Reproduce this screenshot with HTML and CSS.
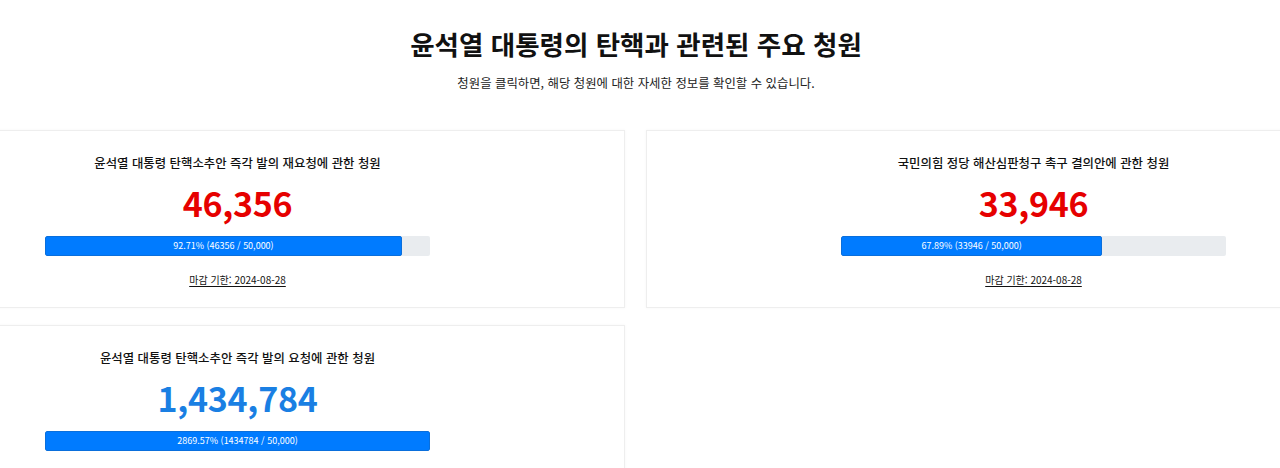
FILE: index.html
```html
<!DOCTYPE html>
<html lang="ko">

<head>
    <meta charset="UTF-8">
    <meta name="viewport" content="width=device-width, initial-scale=1.0">
    <title>윤석열 대통령의 탄핵과 관련된 주요 청원</title>
    <link rel="stylesheet" href="styles.css">
</head>

<body>
    <header class="page-head">
        <h1>윤석열 대통령의 탄핵과 관련된 주요 청원</h1>
        <p class="lead">청원을 클릭하면, 해당 청원에 대한 자세한 정보를 확인할 수 있습니다.</p>
    </header>

    <div class="petitions">
        <a class="card" href="#">
            <h3 class="card-title">윤석열 대통령 탄핵소추안 즉각 발의 재요청에 관한 청원</h3>
            <div class="count">46,356</div>
            <div class="progress">
                <div class="progress-bar" style="width: 92.71%">92.71% (46356 / 50,000)</div>
            </div>
            <span class="deadline">마감 기한: 2024-08-28</span>
        </a>

        <a class="card" href="#">
            <h3 class="card-title">국민의힘 정당 해산심판청구 촉구 결의안에 관한 청원</h3>
            <div class="count">33,946</div>
            <div class="progress">
                <div class="progress-bar" style="width: 67.89%">67.89% (33946 / 50,000)</div>
            </div>
            <span class="deadline">마감 기한: 2024-08-28</span>
        </a>

        <a class="card" href="#">
            <h3 class="card-title">윤석열 대통령 탄핵소추안 즉각 발의 요청에 관한 청원</h3>
            <div class="count done">1,434,784</div>
            <div class="progress">
                <div class="progress-bar" style="width: 100%">2869.57% (1434784 / 50,000)</div>
            </div>
            <span class="deadline">마감 기한: 2024-08-28</span>
        </a>
    </div>
</body>

</html>
```

FILE: styles.css
```css
:root {
    font-family: 'Noto Sans CJK KR', 'Noto Sans', sans-serif;
}
html, body {
    overflow: hidden;
}
body {
    margin: 0;
    background-color: #fff;
    color: #111;
}
.page-head {
    text-align: center;
    padding: 26px 8px 0 0;
}
h1 {
    margin: 0;
    font-size: 26.5px;
    font-weight: 700;
    line-height: 36px;
}
.lead {
    margin: 12px 0 0;
    font-size: 12.4px;
    line-height: 18px;
    color: #222;
}
.petitions {
    display: grid;
    grid-template-columns: 775px 775px;
    column-gap: 21px;
    row-gap: 17px;
    margin: 38px 0 0 -150px;
}
.card {
    display: flex;
    flex-direction: column;
    align-items: center;
    padding: 24px 0 20px;
    border: 1px solid #eee;
    box-shadow: 0 0 3px rgba(0, 0, 0, 0.04);
    text-decoration: none;
    color: #111;
    background-color: #fff;
}
.card-title {
    margin: 0;
    font-size: 12.4px;
    font-weight: 500;
    line-height: 16px;
}
.count {
    margin-top: 10px;
    font-size: 34px;
    font-weight: 700;
    line-height: 44px;
    letter-spacing: -0.3px;
    color: #e60000;
}
.count.done {
    color: #1a7fe3;
}
.progress {
    width: 385px;
    height: 20px;
    margin-top: 11px;
    background-color: #e9ecef;
    border-radius: 2px;
    overflow: hidden;
}
.progress-bar {
    height: 100%;
    box-sizing: border-box;
    background-color: #007bff;
    border: 1px solid #0a6fdc;
    border-radius: 2px;
    color: #fff;
    font-size: 9px;
    line-height: 18px;
    text-align: center;
    white-space: nowrap;
}
.deadline {
    margin-top: 17px;
    font-size: 10px;
    line-height: 14px;
    text-decoration: underline;
    text-underline-offset: 2px;
}
```
